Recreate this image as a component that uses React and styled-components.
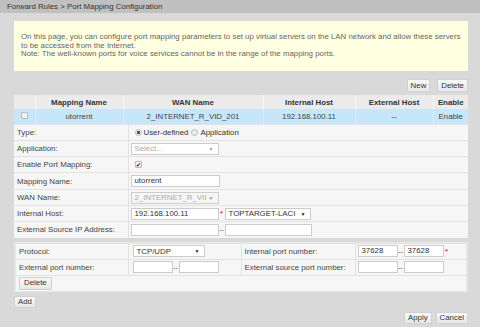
import React from "react";
import styled, { createGlobalStyle } from "styled-components";

const Global = createGlobalStyle`
  html, body { margin: 0; padding: 0; }
  body {
    background: #d9d9d9;
    font-family: "Liberation Sans", Arial, sans-serif;
    font-size: 7.85px;
    color: #333;
    width: 480px;
    height: 327px;
    overflow: hidden;
  }
`;

const TitleBar = styled.div`
  height: 13px;
  line-height: 13px;
  background: #c0c0c0;
  padding-left: 7px;
  color: #333;
  white-space: nowrap;
`;

const Content = styled.div`
  padding: 8px 12px 0 14px;
  display: flex;
  flex-direction: column;
`;

const Note = styled.div`
  background: #ffffe2;
  height: 50px;
  box-sizing: border-box;
  padding: 12px 7px;
  line-height: 8.5px;
  color: #666;
  white-space: nowrap;
`;

const BtnRow = styled.div`
  display: flex;
  justify-content: ${(p) => (p.$end ? "flex-end" : "flex-start")};
  gap: ${(p) => p.$gap || 7}px;
  margin-top: ${(p) => p.$mt || 0}px;
`;

const Button = styled.button`
  height: ${(p) => p.$h || 13}px;
  padding: 0 ${(p) => p.$px || 3}px;
  font-family: inherit;
  font-size: 7.85px;
  color: #333;
  background: linear-gradient(#f8f8f8, #e8e8e8);
  border: 1px solid #d0d0d0;
  border-radius: 1px;
  line-height: 1;
  cursor: pointer;
`;

const Table = styled.table`
  border-collapse: collapse;
  table-layout: fixed;
  width: 454px;
  margin-top: ${(p) => p.$mt || 0}px;
`;

const HeadCell = styled.th`
  height: 14px;
  padding: 0;
  background: #ebebeb;
  font-weight: bold;
  font-size: 7.85px;
  color: #333;
  text-align: center;
  border-left: 1px solid #f7f7f7;
  &:first-child { border-left: none; }
`;

const DataCell = styled.td`
  height: 15px;
  padding: 0;
  background: #c7e6fa;
  text-align: center;
  color: #444;
  border-left: 1px solid #d8eefc;
  &:first-child { border-left: none; }
`;

const FormRow = styled.tr`
  & > td {
    height: ${(p) => p.$h || 16}px;
    box-sizing: border-box;
    background: #f6f6f6;
    border-top: 1px solid #e2e2e2;
    padding: 0;
    vertical-align: middle;
  }
`;

const LabelCell = styled.td`
  padding-left: 3px !important;
  border-right: 1px solid #e2e2e2;
  color: #444;
  white-space: nowrap;
`;

const ValueCell = styled.td`
  padding-left: ${(p) => p.$pl || 2}px !important;
  border-right: ${(p) => (p.$divider ? "1px solid #e2e2e2" : "none")};
`;

const ButtonCell = styled.td`
  padding-left: 3px !important;
`;

const Inline = styled.div`
  display: flex;
  align-items: center;
  white-space: nowrap;
`;

const Input = styled.div`
  width: ${(p) => p.$w || 88}px;
  height: 12px;
  box-sizing: border-box;
  border: 1px solid #ccc;
  background: #fff;
  padding-left: 3px;
  line-height: 10px;
  color: #333;
  overflow: hidden;
`;

const Select = styled.div`
  width: ${(p) => p.$w || 88}px;
  height: 12px;
  box-sizing: border-box;
  border: 1px solid #ccc;
  background: ${(p) => (p.$disabled ? "#f6f6f6" : "#fff")};
  padding: 0 4px 0 3px;
  display: flex;
  align-items: center;
  justify-content: space-between;
  color: ${(p) => (p.$muted ? "#aaa" : "#333")};
  overflow: hidden;
`;

const Arrow = styled.span`
  font-size: 5px;
  color: ${(p) => (p.$muted ? "#999" : "#222")};
`;

const Dash = styled.span`
  color: #555;
  width: 6px;
  text-align: center;
  font-size: 7px;
`;

const Star = styled.span`
  color: #e00;
  width: 6px;
  text-align: center;
`;

const Radio = styled.span`
  width: 7px;
  height: 7px;
  box-sizing: border-box;
  border-radius: 50%;
  border: 1px solid #bbb;
  background: ${(p) => (p.$on ? "radial-gradient(#555 0 1.6px, #eee 1.8px)" : "#eee")};
  display: inline-block;
  margin-left: ${(p) => p.$ml || 0}px;
  margin-right: 2px;
`;

const RadioLabel = styled.span`
  margin-right: ${(p) => p.$mr || 0}px;
`;

const Check = styled.span`
  width: 7px;
  height: 7px;
  box-sizing: border-box;
  border: 1px solid #bbb;
  border-radius: 1px;
  background: #f0f0f0;
  display: inline-flex;
  align-items: center;
  justify-content: center;
  font-size: 6px;
  line-height: 1;
  color: #222;
  margin-left: ${(p) => p.$ml || 0}px;
`;

const Section = styled.div`
  margin-top: 4px;
  background: #e6e6e6;
  padding: 1px 2px;
`;

const SubTable = styled.table`
  border-collapse: collapse;
  table-layout: fixed;
  width: 450px;
`;

const listCols = [21, 88, 140, 92, 78, 35];
const formCols = [114, 340];
const subCols = [112, 113, 114, 111];

export default function App() {
  return (
    <>
      <Global />
      <TitleBar>Forward Rules &gt; Port Mapping Configuration</TitleBar>
      <Content>
        <Note>
          On this page, you can configure port mapping parameters to set up virtual servers on the LAN network and allow these servers
          <br />
          to be accessed from the Internet.
          <br />
          Note: The well-known ports for voice services cannot be in the range of the mapping ports.
        </Note>
        <BtnRow $end $mt={8}>
          <Button>New</Button>
          <Button>Delete</Button>
        </BtnRow>
        <Table $mt={3}>
          <colgroup>
            {listCols.map((w, i) => (
              <col key={i} style={{ width: w }} />
            ))}
          </colgroup>
          <thead>
            <tr>
              <HeadCell />
              <HeadCell>Mapping Name</HeadCell>
              <HeadCell>WAN Name</HeadCell>
              <HeadCell>Internal Host</HeadCell>
              <HeadCell>External Host</HeadCell>
              <HeadCell>Enable</HeadCell>
            </tr>
          </thead>
          <tbody>
            <tr>
              <DataCell>
                <Check />
              </DataCell>
              <DataCell>utorrent</DataCell>
              <DataCell>2_INTERNET_R_VID_201</DataCell>
              <DataCell>192.168.100.11</DataCell>
              <DataCell>--</DataCell>
              <DataCell>Enable</DataCell>
            </tr>
          </tbody>
        </Table>
        <Table>
          <colgroup>
            {formCols.map((w, i) => (
              <col key={i} style={{ width: w }} />
            ))}
          </colgroup>
          <tbody>
            <FormRow>
              <LabelCell>Type:</LabelCell>
              <ValueCell>
                <Inline>
                  <Radio $on $ml={4} />
                  <RadioLabel $mr={3}>User-defined</RadioLabel>
                  <Radio />
                  <RadioLabel>Application</RadioLabel>
                </Inline>
              </ValueCell>
            </FormRow>
            <FormRow>
              <LabelCell>Application:</LabelCell>
              <ValueCell>
                <Select $muted>
                  <span>Select...</span>
                  <Arrow $muted>▼</Arrow>
                </Select>
              </ValueCell>
            </FormRow>
            <FormRow>
              <LabelCell>Enable Port Mapping:</LabelCell>
              <ValueCell>
                <Inline>
                  <Check $ml={4}>✔</Check>
                </Inline>
              </ValueCell>
            </FormRow>
            <FormRow $h={17}>
              <LabelCell>Mapping Name:</LabelCell>
              <ValueCell>
                <Input $w={89}>utorrent</Input>
              </ValueCell>
            </FormRow>
            <FormRow>
              <LabelCell>WAN Name:</LabelCell>
              <ValueCell>
                <Select $muted $disabled>
                  <span>2_INTERNET_R_VII</span>
                  <Arrow $muted>▼</Arrow>
                </Select>
              </ValueCell>
            </FormRow>
            <FormRow>
              <LabelCell>Internal Host:</LabelCell>
              <ValueCell>
                <Inline>
                  <Input>192.168.100.11</Input>
                  <Star>*</Star>
                  <Select $w={86}>
                    <span>TOPTARGET-LACI</span>
                    <Arrow>▼</Arrow>
                  </Select>
                </Inline>
              </ValueCell>
            </FormRow>
            <FormRow>
              <LabelCell>External Source IP Address:</LabelCell>
              <ValueCell>
                <Inline>
                  <Input />
                  <Dash>--</Dash>
                  <Input $w={87} />
                </Inline>
              </ValueCell>
            </FormRow>
          </tbody>
        </Table>
        <Section>
          <SubTable>
            <colgroup>
              {subCols.map((w, i) => (
                <col key={i} style={{ width: w }} />
              ))}
            </colgroup>
            <tbody>
              <FormRow>
                <LabelCell>Protocol:</LabelCell>
                <ValueCell $divider $pl={4}>
                  <Select $w={72}>
                    <span>TCP/UDP</span>
                    <Arrow>▼</Arrow>
                  </Select>
                </ValueCell>
                <LabelCell>Internal port number:</LabelCell>
                <ValueCell>
                  <Inline>
                    <Input $w={40}>37628</Input>
                    <Dash>--</Dash>
                    <Input $w={40}>37628</Input>
                    <Star>*</Star>
                  </Inline>
                </ValueCell>
              </FormRow>
              <FormRow>
                <LabelCell>External port number:</LabelCell>
                <ValueCell $divider $pl={4}>
                  <Inline>
                    <Input $w={40} />
                    <Dash>--</Dash>
                    <Input $w={40} />
                  </Inline>
                </ValueCell>
                <LabelCell>External source port number:</LabelCell>
                <ValueCell>
                  <Inline>
                    <Input $w={40} />
                    <Dash>--</Dash>
                    <Input $w={40} />
                  </Inline>
                </ValueCell>
              </FormRow>
              <FormRow>
                <ButtonCell colSpan={4}>
                  <Button $px={4}>Delete</Button>
                </ButtonCell>
              </FormRow>
            </tbody>
          </SubTable>
        </Section>
        <BtnRow $mt={4}>
          <Button $h={12}>Add</Button>
        </BtnRow>
        <BtnRow $end $mt={4} $gap={4}>
          <Button $h={12}>Apply</Button>
          <Button $h={12}>Cancel</Button>
        </BtnRow>
      </Content>
    </>
  );
}
